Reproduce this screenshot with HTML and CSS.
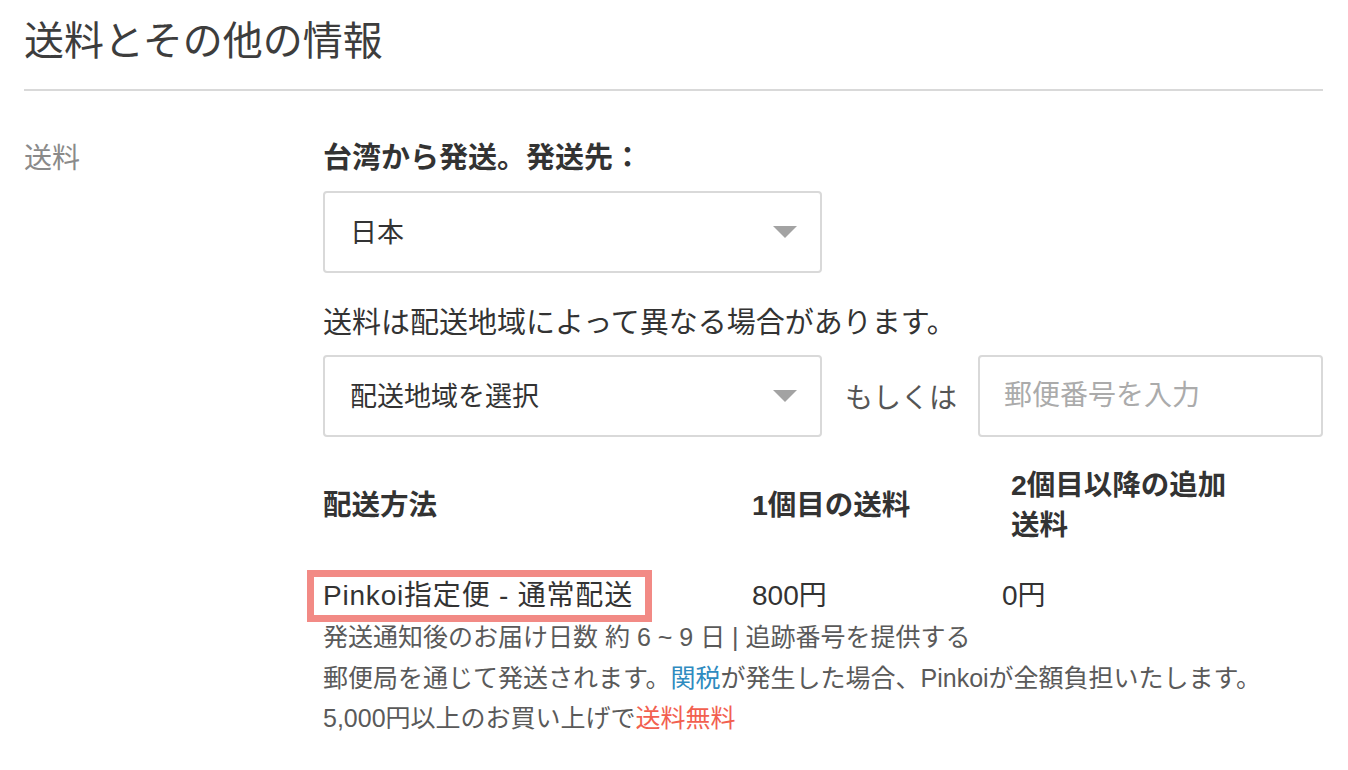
FILE: index.html
```html
<!DOCTYPE html>
<html>

<head>
  <title>送料とその他の情報</title>
  <link rel="stylesheet" href="styles.css">
</head>

<body>
  <div class="info">
    <h2 class="info--title">送料とその他の情報</h2>

    <div class="shipping">
      <div class="shipping--label">送料</div>
      <div class="shipping--content">
        <div class="heading">台湾から発送。発送先：</div>
        <div class="select select-country">
          <span>日本</span>
          <span class="select--arrow"></span>
        </div>

        <div class="note">送料は配送地域によって異なる場合があります。</div>
        <div class="region-row">
          <div class="select select-region">
            <span>配送地域を選択</span>
            <span class="select--arrow"></span>
          </div>
          <span class="region-row--or">もしくは</span>
          <input class="zip-input" placeholder="郵便番号を入力" autocomplete="off" />
        </div>

        <div class="rates rates-head">
          <div>配送方法</div>
          <div>1個目の送料</div>
          <div class="rates--extra">2個目以降の追加送料</div>
        </div>
        <div class="rates rates-row">
          <div class="rates--method"><span class="highlight">Pinkoi指定便 - 通常配送</span></div>
          <div>800円</div>
          <div>0円</div>
        </div>
        <div class="details">
          <div>発送通知後のお届け日数 約 6 ~ 9 日 | 追跡番号を提供する</div>
          <div>郵便局を通じて発送されます。<a class="link-tax" href="#">関税</a>が発生した場合、Pinkoiが全額負担いたします。</div>
          <div>5,000円以上のお買い上げで<span class="free">送料無料</span></div>
        </div>
      </div>
    </div>
  </div>
</body>

</html>
```

FILE: styles.css
```css
body {
  margin: 0;
  background-color: #ffffff;
  color: #333333;
  font-family: "Liberation Sans", "Noto Sans CJK JP", sans-serif;
}

.info {
  padding: 17px 25px 0 24px;
}

.info--title {
  margin: 0;
  padding-bottom: 24px;
  border-bottom: 2px solid #d9d9d9;
  font-size: 40px;
  line-height: 48px;
  font-weight: 400;
  color: #3d3d3d;
}

.shipping {
  display: grid;
  grid-template-columns: 299px 1fr;
  padding-top: 47px;
}

.shipping--label {
  font-size: 28px;
  line-height: 42px;
  color: #8a8a8a;
}

.heading {
  font-size: 29px;
  line-height: 40px;
  font-weight: 700;
  margin-bottom: 13px;
}

.select {
  box-sizing: border-box;
  display: flex;
  justify-content: space-between;
  align-items: center;
  width: 499px;
  height: 82px;
  padding: 0 23px 4px 25px;
  border: 2px solid #d9d9d9;
  border-radius: 4px;
  font-size: 27px;
  color: #333333;
}

.select--arrow {
  width: 0;
  height: 0;
  margin-top: 4px;
  border-left: 12px solid transparent;
  border-right: 12px solid transparent;
  border-top: 12px solid #a3a3a3;
}

.note {
  margin: 30px 0 12px;
  font-size: 29px;
  line-height: 40px;
}

.region-row {
  display: flex;
  align-items: center;
}

.region-row--or {
  margin: 0 21px 0 23px;
  font-size: 28px;
  color: #555555;
}

.zip-input {
  box-sizing: border-box;
  flex: 1;
  min-width: 0;
  height: 82px;
  padding: 0 0 0 24px;
  border: 2px solid #d9d9d9;
  border-radius: 4px;
  outline: none;
  font-family: inherit;
  font-size: 28px;
  color: #333333;
}

.zip-input::placeholder {
  color: #ababab;
}

.rates {
  display: grid;
  grid-template-columns: 429px 250px 1fr;
  align-items: center;
}

.rates-head {
  margin-top: 29px;
  font-size: 28.5px;
  line-height: 39.5px;
  font-weight: 700;
}

.rates--extra {
  padding-left: 9px;
  max-width: 232px;
}

.rates-row {
  margin-top: 31px;
  font-size: 28px;
  line-height: 40px;
}

.rates--method {
  display: flex;
}

.highlight {
  display: block;
  margin: 1px 0 1px -9px;
  padding: 0 12px 0 9px;
  line-height: 38px;
  letter-spacing: 0.8px;
  outline: 7px solid #f28a85;
}

.details {
  font-size: 25px;
  line-height: 40px;
  color: #5a5a5a;
}

.details div:first-child {
  line-height: 42px;
}

.link-tax {
  color: #2f8bc0;
  text-decoration: none;
}

.free {
  color: #f2604f;
}
```
